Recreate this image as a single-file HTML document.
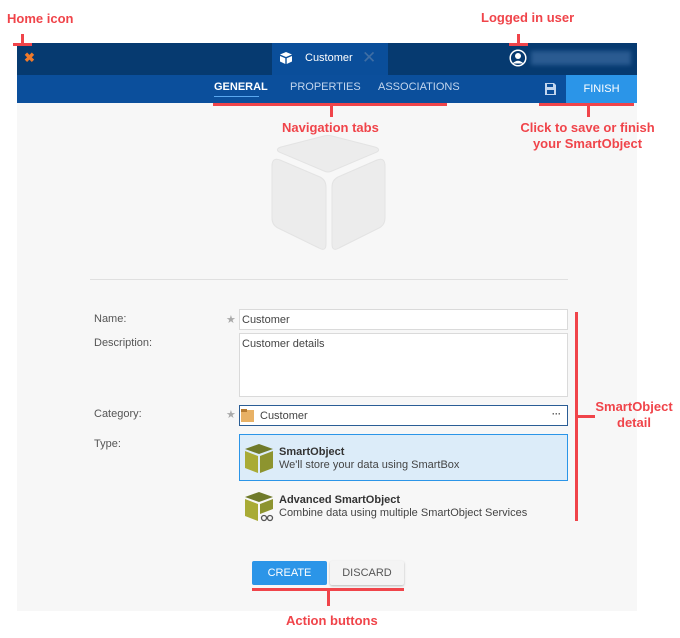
<!DOCTYPE html>
<html><head><meta charset="utf-8"><style>
*{margin:0;padding:0;box-sizing:border-box}
body{width:680px;height:638px;background:#fff;position:relative;font-family:"Liberation Sans",sans-serif;overflow:hidden}
.a{position:absolute}
.r{position:absolute;background:#f0444a}
.an{position:absolute;color:#f0444a;font-weight:bold;font-size:13px;text-align:center;line-height:16px}
.lbl{position:absolute;font-size:11px;color:#555}
.in{position:absolute;background:#fff;border:1px solid #dadada;font-size:11px;color:#444;padding:4px 2px}
.star{position:absolute;color:#aaa;font-size:11px}
</style></head><body>
<div class="a" style="left:17px;top:43px;width:620px;height:32px;background:#063a70"></div>
<div class="a" style="left:272px;top:43px;width:116px;height:32px;background:#0a4e9a"></div>
<div class="a" style="left:24px;top:50px;color:#f07a2a;font-weight:bold;font-size:13px">✖</div>
<svg class="a" style="left:279px;top:51px" width="14" height="14" viewBox="0 0 14 14"><path d="M7 1L13 3.5L7 6L1 3.5Z" fill="#fff"/><path d="M1 5L6.3 7.3V13L1 10.5Z M13 5L7.7 7.3V13L13 10.5Z" fill="#fff"/></svg>
<div class="a" style="left:305px;top:52px;color:#fff;font-size:11px">Customer</div>
<div class="a" style="left:362px;top:48px;color:#3f6ea4;font-size:17px">✕</div>
<svg class="a" style="left:509px;top:49px" width="18" height="18" viewBox="0 0 18 18"><circle cx="9" cy="9" r="7.8" fill="none" stroke="#fff" stroke-width="1.5"/><circle cx="9" cy="7" r="3" fill="#fff"/><path d="M3.5 14.5Q9 9 14.5 14.5" fill="#fff"/></svg>
<div class="a" style="left:531px;top:51px;width:100px;height:14px;background:#2a5b91;filter:blur(2px)"></div>
<div class="a" style="left:17px;top:75px;width:620px;height:28px;background:#0b4f9c"></div>
<div class="a" style="left:214px;top:81px;color:#fff;font-size:11px;font-weight:bold">GENERAL</div>
<div class="a" style="left:214px;top:96px;width:45px;height:1px;background:#5aa8f0"></div>
<div class="a" style="left:290px;top:81px;color:#c3d6ee;font-size:11px">PROPERTIES</div>
<div class="a" style="left:378px;top:81px;color:#c3d6ee;font-size:11px">ASSOCIATIONS</div>
<svg class="a" style="left:544px;top:82px" width="13" height="14" viewBox="0 0 13 14"><path d="M1 1H10L12 3V13H1Z" fill="#c3d6ee"/><rect x="3" y="2" width="6" height="3" fill="#0b4f9c"/><rect x="3" y="8" width="7" height="4" fill="#0b4f9c"/></svg>
<div class="a" style="left:566px;top:75px;width:71px;height:28px;background:#2b95e8;color:#fff;font-size:11px;text-align:center;line-height:29px">FINISH</div>
<div class="a" style="left:17px;top:103px;width:620px;height:508px;background:#f7f7f7"></div>
<svg class="a" style="left:268px;top:130px" width="122" height="125" viewBox="0 0 122 125">
<path d="M11 22Q7 19 13 17L56 6Q60 5 64 6L107 17Q113 19 109 22L64 41Q60 43 56 41Z" fill="#ececec" stroke="#e3e3e3"/>
<path d="M4 36Q4 27 12 30L52 47Q58 50 58 57V114Q58 122 51 118L10 98Q4 95 4 88Z" fill="#ececec" stroke="#e3e3e3"/>
<path d="M117 36Q117 27 109 30L70 47Q64 50 64 57V114Q64 122 71 118L111 98Q117 95 117 88Z" fill="#ececec" stroke="#e3e3e3"/>
</svg>
<div class="a" style="left:90px;top:279px;width:478px;height:1px;background:#e0e0e0"></div>
<div class="lbl" style="left:94px;top:313px">Name:</div>
<div class="lbl" style="left:94px;top:337px">Description:</div>
<div class="lbl" style="left:94px;top:408px">Category:</div>
<div class="lbl" style="left:94px;top:438px">Type:</div>
<div class="star" style="left:226px;top:313px">★</div>
<div class="star" style="left:226px;top:408px">★</div>
<div class="in" style="left:239px;top:309px;width:329px;height:21px">Customer</div>
<div class="in" style="left:239px;top:333px;width:329px;height:64px">Customer details</div>
<div class="in" style="left:239px;top:405px;width:329px;height:21px;border-color:#2a5d95;padding-left:20px">Customer<span style="position:absolute;right:6px;top:3px;font-weight:bold;font-size:9px">···</span></div>
<div class="a" style="left:241px;top:410px;width:13px;height:12px;background:#e8b165"></div>
<div class="a" style="left:241px;top:409px;width:6px;height:3px;background:#b57a30"></div>
<div class="a" style="left:239px;top:434px;width:329px;height:47px;background:#dcecf9;border:1px solid #2b95e8"></div>
<svg class="a" style="left:244px;top:444px" width="30" height="30" viewBox="0 0 30 30"><path d="M1 5L15 0L29 5L15 10Z" fill="#6f7a2a"/><path d="M1 7L14 12V29L1 24Z" fill="#a9ab36"/><path d="M29 7L16 12V29L29 24Z" fill="#8d942f"/></svg>
<div class="a" style="left:279px;top:446px;font-size:11px;font-weight:bold;color:#333">SmartObject</div>
<div class="a" style="left:279px;top:459px;font-size:11px;color:#444">We'll store your data using SmartBox</div>
<svg class="a" style="left:244px;top:492px" width="30" height="30" viewBox="0 0 30 30"><path d="M1 5L15 0L29 5L15 10Z" fill="#6f7a2a"/><path d="M1 7L14 12V29L1 24Z" fill="#a9ab36"/><path d="M29 7L16 12V22L29 17Z" fill="#8d942f"/><circle cx="20" cy="26" r="2.5" fill="none" stroke="#555" stroke-width="1.3"/><circle cx="26" cy="26" r="2.5" fill="none" stroke="#555" stroke-width="1.3"/></svg>
<div class="a" style="left:279px;top:494px;font-size:11px;font-weight:bold;color:#333">Advanced SmartObject</div>
<div class="a" style="left:279px;top:507px;font-size:11px;color:#444">Combine data using multiple SmartObject Services</div>
<div class="a" style="left:252px;top:561px;width:75px;height:24px;background:#2b95e8;color:#fff;font-size:11px;text-align:center;line-height:24px;border-radius:2px">CREATE</div>
<div class="a" style="left:330px;top:561px;width:74px;height:24px;background:#f4f4f4;color:#555;font-size:11px;text-align:center;line-height:24px;border-radius:2px;box-shadow:0 1px 2px rgba(0,0,0,.25)">DISCARD</div>
<div class="an" style="left:7px;top:11px">Home icon</div>
<div class="r" style="left:21px;top:34px;width:3px;height:10px"></div>
<div class="r" style="left:13px;top:43px;width:19px;height:3px"></div>
<div class="an" style="left:481px;top:10px">Logged in user</div>
<div class="r" style="left:517px;top:34px;width:3px;height:10px"></div>
<div class="r" style="left:509px;top:43px;width:19px;height:3px"></div>
<div class="r" style="left:213px;top:103px;width:234px;height:3px"></div>
<div class="r" style="left:330px;top:105px;width:3px;height:12px"></div>
<div class="an" style="left:282px;top:120px">Navigation tabs</div>
<div class="r" style="left:539px;top:103px;width:95px;height:3px"></div>
<div class="r" style="left:587px;top:105px;width:3px;height:12px"></div>
<div class="an" style="left:505px;top:120px;width:165px">Click to save or finish<br>your SmartObject</div>
<div class="r" style="left:575px;top:312px;width:3px;height:209px"></div>
<div class="r" style="left:577px;top:415px;width:18px;height:3px"></div>
<div class="an" style="left:593px;top:399px;width:82px">SmartObject<br>detail</div>
<div class="r" style="left:252px;top:588px;width:152px;height:3px"></div>
<div class="r" style="left:327px;top:590px;width:3px;height:16px"></div>
<div class="an" style="left:286px;top:613px">Action buttons</div>
</body></html>
